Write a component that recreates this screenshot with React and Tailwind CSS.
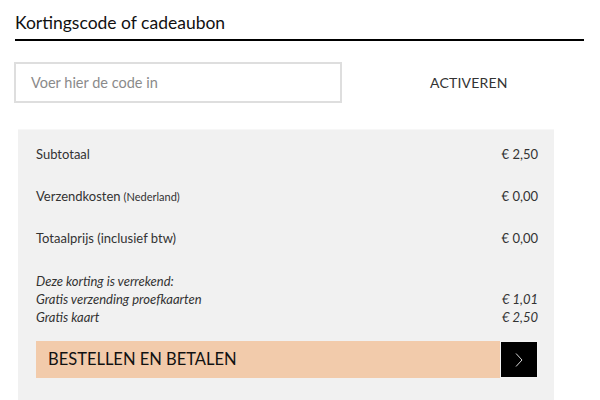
import React from "react";

const rows = [
	{ label: "Subtotaal", note: null, price: "€ 2,50" },
	{ label: "Verzendkosten", note: "(Nederland)", price: "€ 0,00" },
	{ label: "Totaalprijs (inclusief btw)", note: null, price: "€ 0,00" },
];

const discounts = [
	{ label: "Gratis verzending proefkaarten", price: "€ 1,01" },
	{ label: "Gratis kaart", price: "€ 2,50" },
];

const App = () => {
	return (
		<div className="w-[600px] h-[400px] overflow-hidden bg-white font-['Lato',sans-serif] text-[#222]">
			<div className="pl-[15px] pr-[16px] pt-[12px]">
				<h2 className="text-[17.5px] leading-[22px] text-[#111] pb-[5px] border-b-2 border-black">
					Kortingscode of cadeaubon
				</h2>
			</div>

			<div className="flex items-center pl-[14px] mt-[21px]">
				<div className="w-[328px] h-[41px] border-2 border-[#dedede] flex items-center pl-[15px] text-[14.5px] text-[#8a8a8a]">
					Voer hier de code in
				</div>
				<button className="ml-[88px] text-[14px] tracking-[0.2px] text-[#333]">
					ACTIVEREN
				</button>
			</div>

			<div className="ml-[18px] mt-[26px] w-[536px] bg-[#f1f1f1] border-t border-[#f7f7f7] pl-[18px] pr-[16px] pt-[4px] pb-[24px]">
				{rows.map((row) => (
					<div key={row.label} className="flex items-center justify-between h-[42px] text-[13px] text-[#333]">
						<span>
							{row.label}
							{row.note && <span className="text-[11px] ml-[3px]">{row.note}</span>}
						</span>
						<span>{row.price}</span>
					</div>
				))}

				<div className="mt-[12px] italic text-[13px] leading-[18px] text-[#333]">
					<div>Deze korting is verrekend:</div>
					{discounts.map((d) => (
						<div key={d.label} className="flex justify-between">
							<span>{d.label}</span>
							<span>{d.price}</span>
						</div>
					))}
				</div>

				<div className="mt-[15px] flex h-[37px]">
					<div className="flex-1 bg-[#f2cbab] flex items-center pl-[12px] text-[16.5px] text-[#111]">
						BESTELLEN EN BETALEN
					</div>
					<div className="w-[38px] bg-black border border-[#f4f4f4] flex items-center justify-center">
						<svg width="10" height="16" viewBox="0 0 10 16" fill="none">
							<path d="M2 1.5l6 6.5-6 6.5" stroke="#d8d8d8" strokeWidth="1" />
						</svg>
					</div>
				</div>
			</div>
		</div>
	);
};

export default App;
